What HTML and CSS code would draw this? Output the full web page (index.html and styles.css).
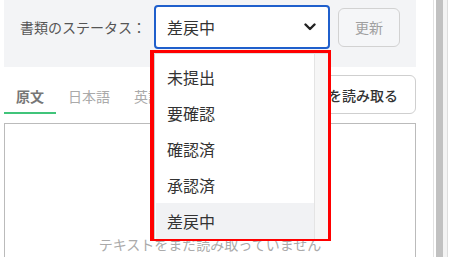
FILE: index.html
```html
<!DOCTYPE html>
<html lang="ja">
<head>
  <meta charset="UTF-8">
  <meta name="viewport" content="width=device-width, initial-scale=1.0">
  <title>書類のステータス</title>
  <link rel="stylesheet" href="styles.css">
</head>
<body>

  <div class="page">
    <div class="main">
      <div class="status-bar">
        <span class="status-label">書類のステータス：</span>
        <div class="status-select">
          <span>差戻中</span>
          <svg class="chevron" width="12" height="8" viewBox="0 0 12 8">
            <polyline points="1.5,1.5 6,6 10.5,1.5" fill="none" stroke="#222" stroke-width="2.4" stroke-linecap="round" stroke-linejoin="round"/>
          </svg>
        </div>
        <button class="btn-update">更新</button>
      </div>

      <div class="tab-row">
        <div class="tabs">
          <div class="tab active">原文</div>
          <div class="tab">日本語</div>
          <div class="tab">英語</div>
        </div>
        <button class="btn-read">テキストを読み取る</button>
      </div>

      <div class="text-box">
        <span class="placeholder">テキストをまだ読み取っていません</span>
      </div>
    </div>

    <div class="scrollbar">
      <div class="thumb"></div>
    </div>
  </div>

  <div class="dropdown">
    <div class="dropdown-inner">
      <ul class="options">
        <li>未提出</li>
        <li>要確認</li>
        <li>確認済</li>
        <li>承認済</li>
        <li class="selected">差戻中</li>
      </ul>
      <div class="options-track"></div>
    </div>
  </div>

</body>
</html>
```

FILE: styles.css
```css
body {
  margin: 0;
  font-family: "Noto Sans CJK JP", "Noto Sans", sans-serif;
  background: white;
  color: #333;
  overflow: hidden;
}
.page {
  display: flex;
  height: 257px;
  overflow: hidden;
}
.main {
  width: 412px;
  margin-left: 4px;
  overflow: hidden;
}
.status-bar {
  display: flex;
  align-items: center;
  gap: 8px;
  height: 67px;
  padding: 5px 16px 18px;
  box-sizing: border-box;
  background: #f3f4f6;
}
.status-label {
  font-size: 14px;
  color: #555;
  width: 126px;
  white-space: nowrap;
}
.status-select {
  display: flex;
  align-items: center;
  justify-content: space-between;
  width: 176px;
  height: 44px;
  box-sizing: border-box;
  padding: 0 12px 0 11px;
  border: 2px solid #1f5fcc;
  border-radius: 4px;
  background: white;
  font-size: 16px;
  color: #333;
}
.btn-update {
  width: 62px;
  height: 39px;
  border: 1px solid #d2d2d2;
  border-radius: 6px;
  background: #f5f6f8;
  color: #a0a0a0;
  font-family: inherit;
  font-size: 14px;
}
.tab-row {
  display: flex;
  justify-content: space-between;
  margin-top: 8px;
  height: 39px;
}
.tabs {
  display: flex;
}
.tab {
  display: flex;
  align-items: center;
  padding: 4px 12px 0;
  font-size: 14px;
  color: #aaa;
  border-bottom: 2px solid transparent;
}
.tab.active {
  color: #777;
  font-weight: 700;
  border-bottom-color: #40c47a;
}
.btn-read {
  height: 39px;
  padding: 0 17px;
  border: 1px solid #cfcfcf;
  border-radius: 6px;
  background: white;
  color: #333;
  font-family: inherit;
  font-size: 14px;
  font-weight: 500;
}
.text-box {
  display: flex;
  align-items: center;
  justify-content: center;
  height: 240px;
  margin-top: 9px;
  border: 1px solid #bbb;
}
.placeholder {
  font-size: 14px;
  color: #aaa;
}
.scrollbar {
  width: 20px;
  margin-left: 17px;
  border-left: 1px solid #e2e2e2;
  box-sizing: border-box;
  padding-left: 2px;
}
.thumb {
  width: 7px;
  height: 100%;
  background: #c1c1c1;
  border-right: 4px solid #f3f3f3;
  box-shadow: 1px 0 0 #ddd;
}

/* menu opened from the select */
.dropdown {
  position: absolute;
  left: 150px;
  top: 50px;
  width: 181px;
  height: 191px;
  box-sizing: border-box;
  border: 3px solid #ff0000;
  border-left-width: 4px;
}
.dropdown-inner {
  display: flex;
  height: 100%;
  background: white;
  border-top: 1px solid #e0e0e0;
}
.options {
  flex: 1;
  list-style: none;
  margin: 0;
  padding: 5px 0 0 1px;
  border-left: 1px solid #cfcfcf;
}
.options li {
  height: 36px;
  line-height: 36px;
  padding-left: 11px;
  font-size: 16px;
  color: #333;
}
.options li.selected {
  background: #f1f2f4;
}
.options-track {
  width: 13px;
  background: #f6f6f6;
  border-left: 1px solid #e4e4e4;
}
```
